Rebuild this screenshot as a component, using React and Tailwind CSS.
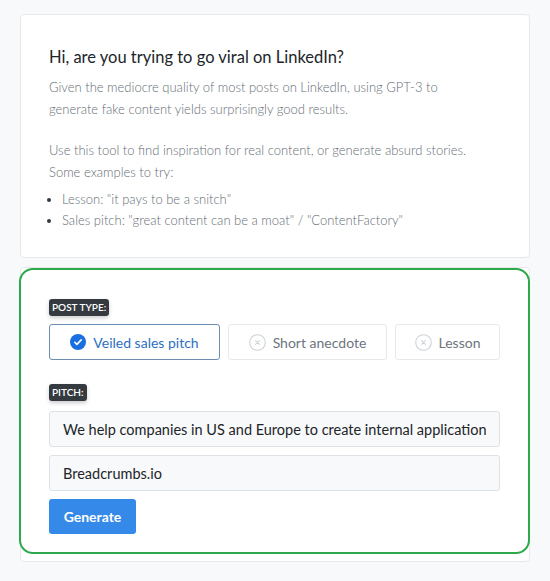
import { useState } from 'react';

const POST_TYPES = [
  { id: 'pitch', label: 'Veiled sales pitch', width: 'w-[171px]' },
  { id: 'anecdote', label: 'Short anecdote', width: 'w-[159px]' },
  { id: 'lesson', label: 'Lesson', width: 'w-[105px]' },
];

function CheckIcon() {
  return (
    <svg width="16" height="16" viewBox="0 0 16 16">
      <circle cx="8" cy="8" r="8" fill="#1a6fe0" />
      <path d="M4.8 8.3l2.1 2.1 4.3-4.5" fill="none" stroke="#fff" strokeWidth="1.6" strokeLinecap="round" strokeLinejoin="round" />
    </svg>
  );
}

function CrossIcon() {
  return (
    <svg width="17" height="17" viewBox="0 0 17 17">
      <circle cx="8.5" cy="8.5" r="7.8" fill="none" stroke="#cfd3d7" strokeWidth="1.1" />
      <path d="M6.6 6.6l3.8 3.8M10.4 6.6l-3.8 3.8" fill="none" stroke="#cfd3d7" strokeWidth="1.1" strokeLinecap="round" />
    </svg>
  );
}

function Badge({ children }) {
  return (
    <span className="inline-block self-start rounded-[3px] bg-[#343a40] px-[3px] py-[1px] text-[10px] font-semibold leading-[15px] text-white shadow-[0_2px_4px_rgba(0,0,0,0.2)]">
      {children}
    </span>
  );
}

export default function App() {
  const [postType, setPostType] = useState('pitch');

  return (
    <div className="min-h-[581px] bg-[#f8f9fa] px-[20px] pt-[14px] font-['Lato','Open_Sans',sans-serif]">
      <div className="flex flex-col gap-[9px]">
        <section className="rounded-[4px] border border-[#e6e8eb] bg-white px-[28px] pt-[31px] pb-[26px]">
          <h1 className="text-[16.5px] leading-[22px] text-[#212529]">Hi, are you trying to go viral on LinkedIn?</h1>
          <p className="mt-[8px] text-[13px] font-light leading-[22px] text-[#666e76]">
            Given the mediocre quality of most posts on LinkedIn, using GPT-3 to
            <br />
            generate fake content yields surprisingly good results.
          </p>
          <p className="mt-[19px] text-[13px] font-light leading-[22px] text-[#666e76]">
            Use this tool to find inspiration for real content, or generate absurd stories.
            <br />
            Some examples to try:
          </p>
          <ul className="mt-[6px] list-disc pl-[13px] text-[13px] font-light leading-[21px] text-[#666e76] marker:text-[#343a40]">
            <li>Lesson: "it pays to be a snitch"</li>
            <li>Sales pitch: "great content can be a moat" / "ContentFactory"</li>
          </ul>
        </section>

        <section className="relative flex flex-col rounded-[4px] border border-[#e6e8eb] bg-white pl-[28px] pr-[29px] pt-[31px] pb-[27px]">
          <div className="pointer-events-none absolute left-[-2px] right-[-1px] top-[0px] bottom-[7px] rounded-[14px] border-[2px] border-[#2da84a]" />
          <Badge>POST TYPE:</Badge>
          <div className="mt-[8px] flex gap-[8px]">
            {POST_TYPES.map((t) => {
              const active = postType === t.id;
              return (
                <button
                  key={t.id}
                  type="button"
                  onClick={() => setPostType(t.id)}
                  className={`flex h-[36px] items-center justify-center gap-[7px] rounded-[3px] border text-[14px] ${t.width} ${
                    active ? 'border-[#6d8db3] text-[#2c6fc2]' : 'border-[#e6e8eb] text-[#6c757d]'
                  }`}
                >
                  {active ? <CheckIcon /> : <CrossIcon />}
                  <span>{t.label}</span>
                </button>
              );
            })}
          </div>

          <div className="mt-[24px] flex">
            <Badge>PITCH:</Badge>
          </div>
          <input
            className="mt-[10px] h-[36px] w-full rounded-[3px] border border-[#dee2e6] bg-[#f8f9fa] px-[13px] text-[14.5px] text-[#212529] outline-none"
            defaultValue="We help companies in US and Europe to create internal applications"
          />
          <input
            className="mt-[8px] h-[36px] w-full rounded-[3px] border border-[#dee2e6] bg-[#f8f9fa] px-[13px] text-[14.5px] text-[#212529] outline-none"
            defaultValue="Breadcrumbs.io"
          />
          <div className="mt-[8px] flex">
            <button type="button" className="h-[35px] w-[87px] rounded-[3px] bg-[#3589e8] text-[14px] font-bold text-white">
              Generate
            </button>
          </div>
        </section>
      </div>
    </div>
  );
}
